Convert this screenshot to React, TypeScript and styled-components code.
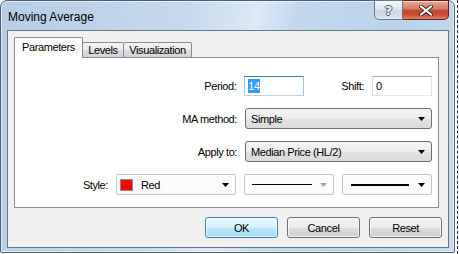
import React from "react";
import styled, { createGlobalStyle } from "styled-components";

const GlobalStyle = createGlobalStyle`
  html, body {
    margin: 0;
    padding: 0;
    background: #fff;
  }
  body {
    font-family: "Liberation Sans", Arial, sans-serif;
    font-size: 11px;
    letter-spacing: -0.4px;
    color: #000;
  }
  * { box-sizing: border-box; }
`;

const Desktop = styled.div`
  display: flex;
  width: 459px;
  height: 254px;
  overflow: hidden;
  background: #fff;
`;

const DesktopEdge = styled.div`
  margin-left: 2px;
  border-left: 1px dashed #2a2a2a;
`;

const Frame = styled.div`
  display: flex;
  flex-direction: column;
  width: 455px;
  height: 253px;
  padding: 0 5px 4px 6px;
  border: 1px solid #4f5f74;
  border-radius: 7px 7px 2px 2px;
  background: linear-gradient(
    100deg,
    #b6cde5 0%,
    #c6d9ee 38%,
    #dce9f6 52%,
    #c3d8ee 60%,
    #bad2eb 82%,
    #c8dcf0 100%
  );
  box-shadow: inset 0 0 0 1px rgba(255, 255, 255, 0.55);
`;

const TitleBar = styled.div`
  display: flex;
  align-items: flex-start;
  height: 29px;
`;

const Title = styled.div`
  margin: 10px 0 0 1px;
  font-size: 12px;
  line-height: 13px;
  letter-spacing: 0;
  color: #000;
`;

const CaptionButtons = styled.div`
  display: flex;
  margin: -1px 0 0 auto;
`;

const CaptionButton = styled.div<{ $close?: boolean }>`
  display: flex;
  align-items: center;
  justify-content: center;
  width: ${p => (p.$close ? 46 : 29)}px;
  height: 20px;
  border: 1px solid ${p => (p.$close ? "#5d2317" : "#6a7a8e")};
  border-left-width: ${p => (p.$close ? 0 : 1)}px;
  border-radius: ${p => (p.$close ? "0 0 5px 0" : "0 0 0 5px")};
  background: ${p =>
    p.$close
      ? "linear-gradient(#e6a597 0%, #d47a66 45%, #c2462f 52%, #c94b33 75%, #e08067 100%)"
      : "linear-gradient(#f1f5f9 0%, #dfe7f0 45%, #cbd7e4 52%, #d2dde9 80%, #e3ebf4 100%)"};
  box-shadow: inset 0 1px 0 rgba(255, 255, 255, 0.6);
`;

const HelpGlyph = styled.span`
  font-family: "DejaVu Sans", sans-serif;
  font-size: 13px;
  font-weight: bold;
  letter-spacing: 0;
  color: #f4f6f8;
  text-shadow: 1px 0 0 #4c5868, -1px 0 0 #4c5868, 0 1px 0 #4c5868,
    0 -1px 0 #4c5868;
`;

const Client = styled.div`
  display: flex;
  flex-direction: column;
  height: 218px;
  padding: 7px 9px 0 6px;
  border: 1px solid #6c7786;
  background: #f0f0f0;
`;

const TabStrip = styled.div`
  display: flex;
  align-items: flex-end;
  height: 20px;
  position: relative;
  z-index: 1;
  margin-bottom: -1px;
`;

const Tab = styled.div<{ $active?: boolean; $width: number }>`
  display: flex;
  align-items: center;
  justify-content: center;
  width: ${p => p.$width}px;
  height: ${p => (p.$active ? 21 : 16)}px;
  margin-left: ${p => (p.$active ? 0 : -1)}px;
  padding-bottom: ${p => (p.$active ? 2 : 0)}px;
  border: 1px solid #898c95;
  border-bottom: ${p => (p.$active ? "none" : "1px solid #898c95")};
  border-radius: 2px 2px 0 0;
  background: ${p =>
    p.$active ? "#fff" : "linear-gradient(#f3f3f3 0%, #ebebeb 50%, #dcdcdc 51%, #d4d4d4 100%)"};
  white-space: nowrap;
  position: relative;
  z-index: ${p => (p.$active ? 2 : 1)};
`;

const Panel = styled.div`
  display: flex;
  flex-direction: column;
  gap: 12px;
  height: 151px;
  padding: 17px 6px 0 0;
  border: 1px solid #898c95;
  background: #fff;
`;

const Row = styled.div`
  display: flex;
  align-items: center;
  justify-content: flex-end;
  height: 21px;
`;

const Label = styled.span<{ $gapLeft?: number }>`
  margin-left: ${p => p.$gapLeft ?? 0}px;
  margin-right: 8px;
  white-space: nowrap;
`;

const TextBox = styled.div<{ $focused?: boolean }>`
  display: flex;
  align-items: center;
  width: 60px;
  height: 20px;
  padding-left: 3px;
  border: 1px solid;
  border-color: ${p =>
    p.$focused ? "#3d7bad #a4c9e8 #b7d5ee #a4c9e8" : "#abadb3 #e2e3ea #e3e9ef #dbdfe6"};
  background: #fff;
`;

const Selection = styled.span`
  background: #3399ff;
  color: #fff;
  padding: 1px 0;
`;

const Combo = styled.div<{ $width: number; $flat?: boolean; $gapLeft?: number }>`
  display: flex;
  align-items: center;
  width: ${p => p.$width}px;
  height: 21px;
  margin-left: ${p => p.$gapLeft ?? 0}px;
  padding: 0 6px 0 3px;
  border: 1px solid ${p => (p.$flat ? "#c6c6c6" : "#707070")};
  border-radius: ${p => (p.$flat ? 2 : 3)}px;
  background: ${p =>
    p.$flat
      ? "#fbfbfb"
      : "linear-gradient(#f4f4f4 0%, #ececec 50%, #e3e3e3 51%, #dadada 100%)"};
`;

const ComboText = styled.span`
  flex: 1;
  padding-left: 2px;
  white-space: nowrap;
`;

const Swatch = styled.span<{ $color: string }>`
  width: 13px;
  height: 12px;
  margin-right: 6px;
  border: 1px solid #8a8a8a;
  background: ${p => p.$color};
`;

const LineSample = styled.span<{ $thickness: number; $width: number; $inset: number }>`
  width: ${p => p.$width}px;
  height: ${p => p.$thickness}px;
  margin-left: ${p => p.$inset}px;
  margin-right: auto;
  background: #000;
`;

const ButtonRow = styled.div`
  display: flex;
  justify-content: flex-end;
  gap: 9px;
  margin: 9px -3px 0 0;
`;

const Button = styled.div<{ $default?: boolean }>`
  display: flex;
  align-items: center;
  justify-content: center;
  width: 73px;
  height: 21px;
  border: 1px solid ${p => (p.$default ? "#3c7fb1" : "#707070")};
  border-radius: 3px;
  background: ${p =>
    p.$default
      ? "linear-gradient(#eaf6fd 0%, #d9f0fc 50%, #bee6fd 51%, #a7d9f5 100%)"
      : "linear-gradient(#f2f2f2 0%, #ebebeb 50%, #dddddd 51%, #cfcfcf 100%)"};
  box-shadow: inset 0 0 0 1px rgba(255, 255, 255, 0.7);
`;

const Arrow = ({ disabled }: { disabled?: boolean }) => (
  <svg width="7" height="4" viewBox="0 0 7 4">
    <path d="M0 0h7L3.5 4z" fill={disabled ? "#a6a6a6" : "#000"} />
  </svg>
);

const CloseIcon = () => (
  <svg width="14" height="11" viewBox="0 0 14 11">
    <path d="M2 1.5l10 8M12 1.5l-10 8" stroke="#3a2a28" strokeWidth="4" strokeLinecap="round" />
    <path d="M2 1.5l10 8M12 1.5l-10 8" stroke="#fff" strokeWidth="2.2" strokeLinecap="round" />
  </svg>
);

export default function App() {
  return (
    <Desktop>
      <GlobalStyle />
      <Frame>
        <TitleBar>
          <Title>Moving Average</Title>
          <CaptionButtons>
            <CaptionButton>
              <HelpGlyph>?</HelpGlyph>
            </CaptionButton>
            <CaptionButton $close>
              <CloseIcon />
            </CaptionButton>
          </CaptionButtons>
        </TitleBar>
        <Client>
          <TabStrip>
            <Tab $active $width={69}>Parameters</Tab>
            <Tab $width={42}>Levels</Tab>
            <Tab $width={69}>Visualization</Tab>
          </TabStrip>
          <Panel>
            <Row>
              <Label>Period:</Label>
              <TextBox $focused>
                <Selection>14</Selection>
              </TextBox>
              <Label $gapLeft={37}>Shift:</Label>
              <TextBox>0</TextBox>
            </Row>
            <Row>
              <Label>MA method:</Label>
              <Combo $width={187}>
                <ComboText>Simple</ComboText>
                <Arrow />
              </Combo>
            </Row>
            <Row>
              <Label>Apply to:</Label>
              <Combo $width={187}>
                <ComboText>Median Price (HL/2)</ComboText>
                <Arrow />
              </Combo>
            </Row>
            <Row>
              <Label>Style:</Label>
              <Combo $flat $width={120}>
                <Swatch $color="#ff0000" />
                <ComboText>Red</ComboText>
                <Arrow />
              </Combo>
              <Combo $flat $width={90} $gapLeft={8}>
                <LineSample $thickness={1} $width={60} $inset={4} />
                <Arrow disabled />
              </Combo>
              <Combo $flat $width={90} $gapLeft={8}>
                <LineSample $thickness={2} $width={58} $inset={5} />
                <Arrow />
              </Combo>
            </Row>
          </Panel>
          <ButtonRow>
            <Button $default>OK</Button>
            <Button>Cancel</Button>
            <Button>Reset</Button>
          </ButtonRow>
        </Client>
      </Frame>
      <DesktopEdge />
    </Desktop>
  );
}
